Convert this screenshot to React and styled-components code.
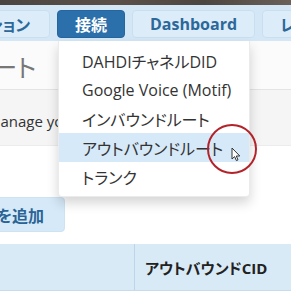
import React from "react";
import styled, { createGlobalStyle } from "styled-components";

const GlobalStyle = createGlobalStyle`
  body {
    margin: 0;
    background: #ffffff;
    font-family: "Open Sans", "Noto Sans CJK JP", sans-serif;
    font-feature-settings: "palt";
  }
`;

const Screen = styled.div`
  position: relative;
  width: 291px;
  height: 292px;
  overflow: hidden;
  background: #ffffff;
`;

const TopStrip = styled.div`
  height: 5px;
  background: linear-gradient(90deg, #4a4541 0%, #5b5049 40%, #4c4640 70%, #6a6159 100%);
`;

const NavBar = styled.div`
  display: flex;
  gap: 7px;
  height: 36px;
  padding-top: 5px;
  box-sizing: border-box;
  background: #d4e7f6;
`;

const Tab = styled.div`
  flex: none;
  display: flex;
  align-items: center;
  justify-content: flex-end;
  height: 28px;
  padding: 0 17px;
  box-sizing: border-box;
  border-radius: 4px;
  border: 1px solid ${(p) => (p.$active ? "#2566a0" : "#c9dff0")};
  background: ${(p) => (p.$active ? "#2b6fab" : "#dcedf9")};
  color: ${(p) => (p.$active ? "#ffffff" : "#2c6899")};
  font-size: 16px;
  font-weight: 700;
  white-space: nowrap;
  overflow: hidden;
`;

const FirstTab = styled(Tab)`
  width: 80px;
  margin-left: -30px;
  padding-right: 19px;
`;

const Heading = styled.div`
  height: 49px;
  display: flex;
  align-items: center;
  padding-top: 2px;
  box-sizing: border-box;
  background: #fbfbfb;
  border-bottom: 1px solid #e4e4e4;
  font-size: 25px;
  color: #777777;
  white-space: nowrap;
  & span {
    margin-left: -31px;
  }
`;

const InfoBand = styled.div`
  height: 56px;
  display: flex;
  align-items: center;
  padding-top: 6px;
  box-sizing: border-box;
  background: #f5f5f5;
  border-bottom: 1px solid #ececec;
  font-size: 15px;
  color: #333333;
  white-space: nowrap;
  & span {
    margin-left: -13px;
  }
`;

const Toolbar = styled.div`
  display: flex;
  padding-top: 51px;
`;

const AddButton = styled.div`
  display: flex;
  align-items: center;
  justify-content: flex-end;
  width: 120px;
  margin-left: -55px;
  height: 35px;
  padding-right: 20px;
  box-sizing: border-box;
  border-radius: 4px;
  background: #d6e9f8;
  border: 1px solid #cde2f3;
  color: #2a6496;
  font-size: 16px;
  font-weight: 700;
  white-space: nowrap;
  overflow: hidden;
`;

const TableHead = styled.div`
  display: grid;
  grid-template-columns: 134px 1fr;
  height: 46px;
  margin-top: 12px;
  background: #d9eaf7;
  border-bottom: 1px solid #c6dcec;
`;

const HeadCell = styled.div`
  display: flex;
  align-items: center;
  padding-left: 10px;
  border-left: ${(p) => (p.$divided ? "1px solid #bcd5e8" : "none")};
  font-size: 15px;
  font-weight: 700;
  color: #222222;
  white-space: nowrap;
`;

const Menu = styled.div`
  position: absolute;
  left: 58px;
  top: 41px;
  width: 192px;
  height: 156px;
  padding: 5px 0;
  box-sizing: border-box;
  background: #ffffff;
  border: 1px solid rgba(0, 0, 0, 0.08);
  border-top: none;
  border-radius: 0 0 4px 4px;
  box-shadow: 0 6px 12px rgba(0, 0, 0, 0.17);
`;

const MenuItem = styled.div`
  height: 29px;
  display: flex;
  align-items: center;
  padding-left: 23px;
  background: ${(p) => (p.$hover ? "#d6e9f8" : "transparent")};
  font-size: 16px;
  color: #333333;
  white-space: nowrap;
`;

const Ring = styled.div`
  position: absolute;
  left: 207px;
  top: 124px;
  width: 50px;
  height: 50px;
  box-sizing: border-box;
  border-radius: 50%;
  border: 2.5px solid #b3232a;
`;

const Pointer = styled.svg`
  position: absolute;
  left: 231px;
  top: 147px;
`;

const items = [
  "DAHDIチャネルDID",
  "Google Voice (Motif)",
  "インバウンドルート",
  "アウトバウンドルート",
  "トランク",
];

export default function App() {
  return (
    <Screen>
      <GlobalStyle />
      <TopStrip />
      <NavBar>
        <FirstTab>ケーション</FirstTab>
        <Tab $active>接続</Tab>
        <Tab>Dashboard</Tab>
        <Tab>レポート</Tab>
      </NavBar>
      <Heading>
        <span>ルート</span>
      </Heading>
      <InfoBand>
        <span>Manage your Outbound Routes</span>
      </InfoBand>
      <Toolbar>
        <AddButton>ルートを追加</AddButton>
      </Toolbar>
      <TableHead>
        <HeadCell />
        <HeadCell $divided>アウトバウンドCID</HeadCell>
      </TableHead>
      <Menu>
        {items.map((label) => (
          <MenuItem key={label} $hover={label === "アウトバウンドルート"}>
            {label}
          </MenuItem>
        ))}
      </Menu>
      <Ring />
      <Pointer width="10" height="15" viewBox="0 0 10 15">
        <path
          d="M1 1 L1 12 L3.6 9.6 L5.4 13.6 L7 12.9 L5.3 9 L8.8 9 Z"
          fill="#ffffff"
          stroke="#333333"
          strokeWidth="1"
          strokeLinejoin="round"
        />
      </Pointer>
    </Screen>
  );
}
